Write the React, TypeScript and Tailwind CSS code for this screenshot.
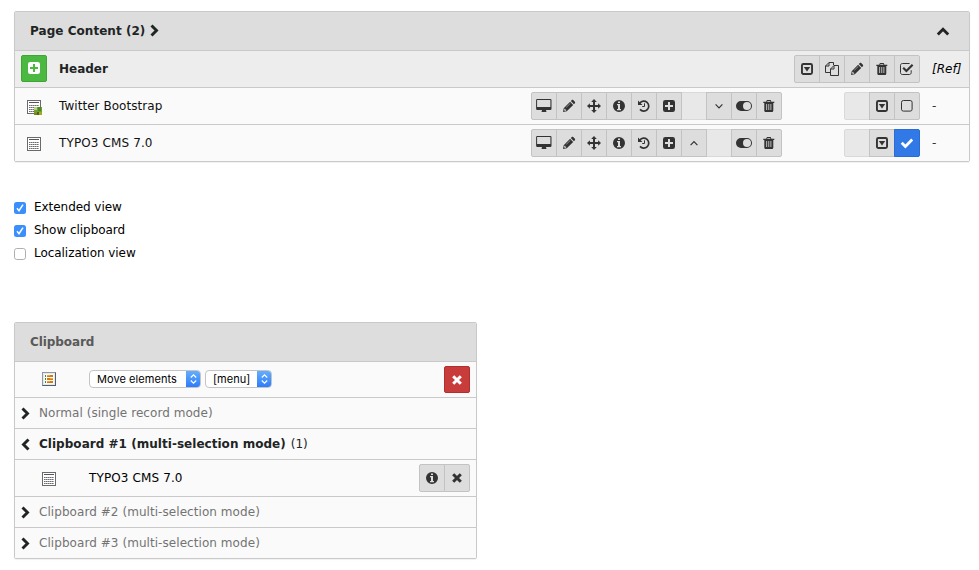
import React from "react";

type IconName =
  | "desktop" | "pencil" | "move" | "info" | "history" | "plus" | "down" | "up"
  | "toggle" | "trash" | "caret" | "copy" | "checkSquare" | "square" | "check" | "times";

const icons: Record<IconName, { w: number; art: React.ReactNode }> = {
  desktop: {
    w: 16,
    art: (
      <path fillRule="evenodd" d="M1.300 0h12.900A1.200 1.200 0 0 1 15.500 1.200v8.600a1.200 1.200 0 0 1-1.200 1.200H10c0 .8.5 1 .5 1.500 0 .3-.2.5-.5.5H6c-.3 0-.5-.2-.5-.5 0-.5.5-.7.5-1.500H1.300A1.200 1.200 0 0 1 .1 9.800V1.200A1.200 1.200 0 0 1 1.300 0zM1.100 1.200v6.600c0 .1.1.2.2.2h12.900c.1 0 .2-.1.2-.2V1.200c0-.1-.1-.2-.2-.2H1.300c-.1 0-.2.1-.2.2z" />
    ),
  },
  pencil: {
    w: 12,
    art: (
      <path fillRule="evenodd" d="M0 13l.7-3.800 6.400-6.400 3.100 3.100L3.800 12.300zM1.500 9.800l-.4 1.300.8.800 1.300-.4v-.8h-.9v-.9zM7.100 4.300L3.100 8.300l.3.300 4-4zM7.800 2.100l1-1c.4-.4 1-.4 1.400 0l1.700 1.700c.4.4.4 1 0 1.400l-1 1z" />
    ),
  },
  move: {
    w: 14,
    art: (
      <path d="M7 0l2.800 2.900H8V6h3.100V4.200L14 7l-2.900 2.800V8H8v3.100h1.800L7 14l-2.800-2.900H6V8H2.900v1.800L0 7l2.900-2.800V6H6V2.900H4.200z" />
    ),
  },
  info: {
    w: 12,
    art: (
      <path fillRule="evenodd" d="M6 1a6 6 0 1 1 0 12A6 6 0 0 1 6 1zM5 2.500V4h2V2.500zM4 5v1.200h1V10H4v1.200h4V10H7V5z" />
    ),
  },
  history: {
    w: 12,
    art: (
      <>
        <path d="M1.800 4A5 5 0 1 1 2 10.400" fill="none" stroke="currentColor" strokeWidth="1.700" />
        <path d="M0 1.500V6h4.500z" />
        <path d="M6.500 4.300v3.200H4.200" fill="none" stroke="currentColor" strokeWidth="1" />
      </>
    ),
  },
  plus: {
    w: 12,
    art: (
      <path fillRule="evenodd" d="M2.300 1h7.400A2.300 2.300 0 0 1 12 3.300v7.400A2.300 2.300 0 0 1 9.700 13H2.300A2.300 2.300 0 0 1 0 10.700V3.300A2.300 2.300 0 0 1 2.300 1zM5 3v3H2v2h3v3h2V8h3V6H7V3z" />
    ),
  },
  down: { w: 8, art: <path d="M.6 5.400L4 8.800l3.400-3.400" fill="none" stroke="currentColor" strokeWidth="1.200" /> },
  up: { w: 8, art: <path d="M.6 9.100L4 5.700l3.400 3.400" fill="none" stroke="currentColor" strokeWidth="1.200" /> },
  toggle: {
    w: 16,
    art: (
      <path fillRule="evenodd" d="M5 2h6a5 5 0 0 1 0 10H5A5 5 0 0 1 5 2zm6 1a4 4 0 1 0 0 8 4 4 0 0 0 0-8z" />
    ),
  },
  trash: {
    w: 12,
    art: (
      <g transform="translate(.3 0)">
        <path fillRule="evenodd" d="M3.600 1h3.800l.7 1.700H11V4h-1v7.500c0 .8-.5 1.500-1.200 1.500H2.200C1.500 13 1 12.300 1 11.500V4H0V2.700h2.900zM4.100 1.900l-.3.800h3.400l-.3-.8zM3 5v6h.8V5zm2.100 0v6h.8V5zm2.100 0v6h.8V5z" />
      </g>
    ),
  },
  caret: {
    w: 12,
    art: (
      <>
        <rect x=".95" y="1.950" width="10.100" height="10.100" rx="1.500" fill="none" stroke="currentColor" strokeWidth="1.900" />
        <path d="M2.800 5h6.400L6 9.500z" />
      </>
    ),
  },
  copy: {
    w: 14,
    art: (
      <>
        <path d="M5.500 10.500h-5V4L4 .5h4.500V3M4 .5V4H.5" fill="none" stroke="currentColor" />
        <path d="M5.500 7L9 3.500h4.500v10h-8zM9 3.500V7H5.500" fill="none" stroke="currentColor" />
      </>
    ),
  },
  checkSquare: {
    w: 14,
    art: (
      <>
        <path d="M11.200 8.300v2.400c0 1-.8 1.800-1.800 1.800H2.300c-1 0-1.800-.8-1.800-1.800V3.300c0-1 .8-1.800 1.800-1.800h7.300" fill="none" stroke="currentColor" />
        <path d="M3.200 5.800l3.200 3.200 6.200-6.200" fill="none" stroke="currentColor" strokeWidth="2.200" />
      </>
    ),
  },
  square: { w: 12, art: <rect x=".5" y="1.500" width="10.600" height="10.600" rx="1.900" fill="none" stroke="currentColor" /> },
  check: { w: 14, art: <path d="M1.700 6.700l3.700 3.800 6.800-6.900" fill="none" stroke="currentColor" strokeWidth="2.800" /> },
  times: { w: 10, art: <path d="M1.200 3.200l7.600 7.600M8.800 3.200L1.200 10.800" fill="none" stroke="currentColor" strokeWidth="3" /> },
};

function Icon({ name }: { name: IconName }) {
  const { w, art } = icons[name];
  return (
    <svg width={w} height="14" viewBox={`0 0 ${w} 14`} fill="currentColor" className="block shrink-0 overflow-visible">
      {art}
    </svg>
  );
}

function Chevron({ dir }: { dir: "right" | "left" | "up" }) {
  const d = { right: "M1.500 1.500L6.500 6.500 1.500 11.500", left: "M7.500 1.500L2.500 6.500 7.500 11.500", up: "M1.800 9.500L7 4.300l5.200 5.200" }[dir];
  const w = dir === "up" ? 14 : 9;
  return (
    <svg width={w} height="13" viewBox={`0 0 ${w} 13`} className="block shrink-0 text-[#212424]">
      <path d={d} fill="none" stroke="currentColor" strokeWidth="2.900" />
    </svg>
  );
}

type Cell = IconName | "empty" | "checked";

function ButtonGroup({ cells }: { cells: Cell[] }) {
  return (
    <div className="flex h-7 shrink-0">
      {cells.map((c, i) => {
        const shape = `${i === 0 ? "w-[26px] rounded-l-xs" : "-ml-px w-[26px]"} ${i === cells.length - 1 ? "rounded-r-xs" : ""}`;
        const tone =
          c === "empty"
            ? "border-[#d9d9d9] bg-[#e8e8e8]"
            : c === "checked"
              ? "z-10 border-[#2a6cd0] bg-[#3179e6] text-white"
              : "z-[1] border-[#c3c3c3] bg-[#dddddd] text-[#333333]";
        return (
          <div key={i} className={`relative flex items-center justify-center border ${shape} ${tone}`}>
            {c !== "empty" && <Icon name={c === "checked" ? "check" : c} />}
          </div>
        );
      })}
    </div>
  );
}

function RecordIcon({ image }: { image?: boolean }) {
  return (
    <svg width="16" height="16" viewBox="0 0 16 16" className="block shrink-0">
      <rect x="1.500" y="1.500" width="13" height="13" fill="#fff" stroke="#6a6a6c" />
      <path d="M3 3.500h10" stroke="#55565a" />
      <path d="M3 6.500h10M3 8.500h10M3 10.500h10M3 12.500h10" stroke="#6c6c70" strokeDasharray="1.600 .4" />
      {image && (
        <>
          <rect x="8" y="8" width="8" height="8" fill="#6fa036" />
          <path d="M8 8h3v3H8z" fill="#b9cf8a" />
          <path d="M12 8h3v4h-3z" fill="#4c8a1d" />
          <path d="M8 14h3v2H8z" fill="#6c8b16" />
          <path d="M11 13h2v3h-2z" fill="#6b5424" />
          <path d="M13 13h3v3h-3z" fill="#98ae20" />
        </>
      )}
    </svg>
  );
}

function ListIcon() {
  return (
    <svg width="14" height="14" viewBox="0 0 14 14" className="block shrink-0">
      <rect width="14" height="14" fill="#545d6e" />
      <path d="M0 0h14l-1 1H1v12l-1 1z" fill="#8e98a6" />
      <rect x="1" y="1" width="12" height="12" fill="#e3e7ee" />
      <rect x="2" y="2" width="10" height="10" fill="#fbfaf6" />
      <path d="M3 4h1M3 7h1M3 10h1" stroke="#3f8a3a" strokeWidth="2" />
      <path d="M5 4h6M5 7h6M5 10h6" stroke="#d17a14" strokeWidth="2" />
      <path d="M5 3.500h3M8 6.500h3M5 9.500h3" stroke="#eda53b" />
    </svg>
  );
}

function RecordRow({ title, image, actions, tail }: { title: string; image?: boolean; actions: Cell[]; tail: Cell[] }) {
  return (
    <div className="flex h-[37px] items-center border-t border-[#c9c9c9] bg-[#fafafa] text-black">
      <div className="w-[44px] pt-[2px] pl-[11px]"><RecordIcon image={image} /></div>
      <div className={`w-[472px] text-[#111] ${image ? "tracking-[0.05px]" : "tracking-[0.12px]"}`}>{title}</div>
      <ButtonGroup cells={actions} />
      <div className="w-[62px]" />
      <ButtonGroup cells={tail} />
      <div className="pl-3 text-[#333]">-</div>
    </div>
  );
}

function CheckRow({ label, on }: { label: string; on?: boolean }) {
  return (
    <div className="flex h-[23px] items-center gap-2 tracking-[-0.05px]">
      <svg width="12" height="12" viewBox="0 0 12 12" className="block">
        {on ? (
          <>
            <rect width="12" height="12" rx="2.500" fill="#3b8ffc" />
            <path d="M3 6.300l2 2.400 4-6" fill="none" stroke="#fff" strokeWidth="1.500" />
          </>
        ) : (
          <rect x=".5" y=".5" width="11" height="11" rx="2.300" fill="#fff" stroke="#b0b0b0" />
        )}
      </svg>
      <span>{label}</span>
    </div>
  );
}

function Select({ label, size }: { label: string; size: string }) {
  return (
    <div className={`flex h-[18px] overflow-hidden rounded-[4px] border border-[#c4c4c4] bg-white ${size}`}>
      <span className="flex-1 pl-[7px] font-[Inter,sans-serif] text-[11px] leading-4 tracking-[0.06px] whitespace-nowrap text-black">{label}</span>
      <span className="-my-px -mr-px flex w-[15px] items-center justify-center bg-linear-to-b from-[#68b0fa] to-[#2a78fb]">
        <svg width="7" height="10" viewBox="0 0 7 10">
          <path d="M.8 3.500L3.500.9l2.700 2.600M.8 6.500l2.700 2.600 2.700-2.600" fill="none" stroke="#fff" strokeWidth="1.200" />
        </svg>
      </span>
    </div>
  );
}

function ClipboardMode({ label }: { label: string }) {
  return (
    <div className="flex h-[31px] items-center border-t border-[#c9c9c9] bg-[#fafafa] pl-[6px] text-[#737373]">
      <div className="w-[18px]"><Chevron dir="right" /></div>
      <span className="tracking-[0.06px]">{label}</span>
    </div>
  );
}

const panel = "overflow-hidden rounded-xs border border-[#c9c9c9] shadow-[0_1px_1px_rgba(0,0,0,0.06)]";

export default function App() {
  return (
    <div className="h-[570px] w-[979px] overflow-hidden bg-white px-[14px] pt-[11px] font-['DejaVu_Sans',sans-serif] text-[12px] leading-[17px] whitespace-nowrap text-black">
      <section className={`w-[956px] ${panel}`}>
        <header className="flex h-[38px] items-center bg-[#dddddd] pr-[19px] pl-[15px] text-[#212424]">
          <span className="font-bold tracking-[0.04px]">Page Content (2)</span>
          <div className="-mt-px ml-[5px]"><Chevron dir="right" /></div>
          <div className="ml-auto"><Chevron dir="up" /></div>
        </header>
        <div className="flex h-[37px] items-center border-t border-[#c9c9c9] bg-[#ededed]">
          <div className="-mt-px mr-3 ml-[6px] flex h-[27px] w-[26px] items-center justify-center rounded-xs border border-[#3fa535] bg-[#4bb941] text-white">
            <div className="-mt-px"><Icon name="plus" /></div>
          </div>
          <div className="flex-1 font-bold text-[#212424]">Header</div>
          <ButtonGroup cells={["caret", "copy", "pencil", "trash", "checkSquare"]} />
          <div className="w-[49px] pl-3 italic">[Ref]</div>
        </div>
        <RecordRow
          title="Twitter Bootstrap"
          image
          actions={["desktop", "pencil", "move", "info", "history", "plus", "empty", "down", "toggle", "trash"]}
          tail={["empty", "caret", "square"]}
        />
        <RecordRow
          title="TYPO3 CMS 7.0"
          actions={["desktop", "pencil", "move", "info", "history", "plus", "up", "empty", "toggle", "trash"]}
          tail={["empty", "caret", "checked"]}
        />
      </section>

      <div className="mt-[34px] mb-[57px]">
        <CheckRow label="Extended view" on />
        <CheckRow label="Show clipboard" on />
        <CheckRow label="Localization view" />
      </div>

      <section className={`w-[463px] ${panel}`}>
        <header className="flex h-[38px] items-center bg-[#dddddd] pl-[15px] font-bold tracking-[-0.08px] text-[#595959]">Clipboard</header>
        <div className="flex h-[36px] items-center border-t border-[#c9c9c9] bg-[#fafafa] pr-[6px]">
          <div className="-mt-px w-[74px] pl-[27px]"><ListIcon /></div>
          <div className="-mt-px flex gap-1">
            <Select label="Move elements" size="w-[112px]" />
            <Select label="[menu]" size="w-[67px]" />
          </div>
          <div className="ml-auto flex h-[27px] w-[26px] items-center justify-center rounded-xs border border-[#b32f2f] bg-[#c83c3c] text-white">
            <Icon name="times" />
          </div>
        </div>
        <ClipboardMode label="Normal (single record mode)" />
        <div className="flex h-[31px] items-center border-t border-[#c9c9c9] bg-[#fafafa] pl-[6px] text-[#212424]">
          <div className="w-[18px]"><Chevron dir="left" /></div>
          <span className="font-bold tracking-[0.03px]">Clipboard #1 (multi-selection mode)</span>
          <span className="pl-[5px]">(1)</span>
        </div>
        <div className="flex h-[37px] items-center border-t border-[#c9c9c9] bg-[#fafafa] pr-[6px]">
          <div className="w-[74px] pt-[2px] pl-[26px]"><RecordIcon /></div>
          <span className="flex-1 tracking-[0.12px]">TYPO3 CMS 7.0</span>
          <ButtonGroup cells={["info", "times"]} />
        </div>
        <ClipboardMode label="Clipboard #2 (multi-selection mode)" />
        <ClipboardMode label="Clipboard #3 (multi-selection mode)" />
      </section>
    </div>
  );
}
